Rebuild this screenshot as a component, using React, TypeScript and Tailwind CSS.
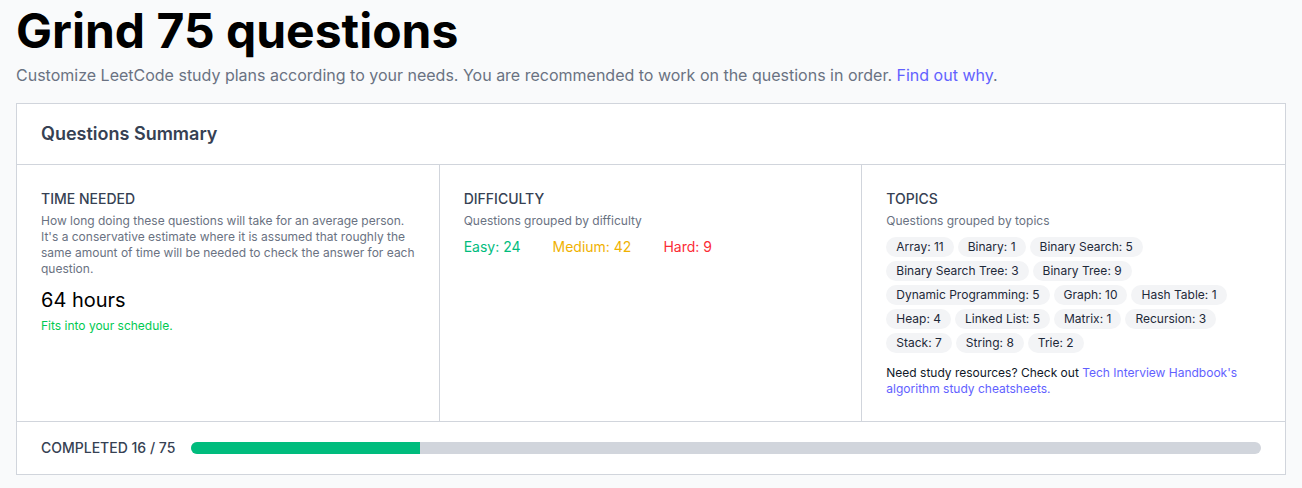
const topics: [string, number][] = [
  ["Array", 11],
  ["Binary", 1],
  ["Binary Search", 5],
  ["Binary Search Tree", 3],
  ["Binary Tree", 9],
  ["Dynamic Programming", 5],
  ["Graph", 10],
  ["Hash Table", 1],
  ["Heap", 4],
  ["Linked List", 5],
  ["Matrix", 1],
  ["Recursion", 3],
  ["Stack", 7],
  ["String", 8],
  ["Trie", 2],
];

function SectionTitle({ title, subtitle }: { title: string; subtitle: string }) {
  return (
    <>
      <h3 className="text-sm font-medium uppercase text-gray-700">{title}</h3>
      <p className="mt-1 text-xs text-gray-500">{subtitle}</p>
    </>
  );
}

export default function App() {
  const completed = 16;
  const total = 75;
  const pct = (completed / total) * 100;

  return (
    <div className="min-h-screen bg-gray-50 px-4 pt-[7px] pb-3.5 font-['Inter',sans-serif]">
      <h1 className="text-5xl leading-none font-bold text-black">Grind 75 questions</h1>
      <p className="mt-2 text-base text-gray-500">
        Customize LeetCode study plans according to your needs. You are recommended to work on
        the questions in order.{" "}
        <a href="#" className="text-indigo-500">
          Find out why
        </a>
        .
      </p>

      <div className="mt-4 border border-gray-300 bg-white">
        <div className="border-b border-gray-300 px-6 py-4">
          <h2 className="text-lg font-semibold text-gray-700">Questions Summary</h2>
        </div>

        <div className="grid grid-cols-3 divide-x divide-gray-300">
          <div className="p-6">
            <h3 className="text-sm font-medium uppercase text-gray-700">Time needed</h3>
            <p className="mt-1 text-xs text-gray-500">
              How long doing these questions will take for an average person. It's a
              conservative estimate where it is assumed that roughly the same amount of time
              will be needed to check the answer for each question.
            </p>
            <p className="mt-[9px] text-xl text-black">64 hours</p>
            <p className="mt-1 text-xs text-green-500">Fits into your schedule.</p>
          </div>

          <div className="p-6">
            <SectionTitle title="Difficulty" subtitle="Questions grouped by difficulty" />
            <div className="mt-2 flex gap-8 text-sm">
              <span className="text-emerald-500">Easy: 24</span>
              <span className="text-yellow-500">Medium: 42</span>
              <span className="text-red-500">Hard: 9</span>
            </div>
          </div>

          <div className="p-6">
            <SectionTitle title="Topics" subtitle="Questions grouped by topics" />
            <div className="mt-2 flex flex-wrap gap-1">
              {topics.map(([name, count]) => (
                <span
                  key={name}
                  className="rounded-full bg-gray-100 px-2.5 py-0.5 text-xs text-gray-800"
                >
                  {name}: {count}
                </span>
              ))}
            </div>
            <p className="mt-3 text-xs text-gray-900">
              Need study resources? Check out{" "}
              <a href="#" className="text-indigo-500">
                Tech Interview Handbook's algorithm study cheatsheets.
              </a>
            </p>
          </div>
        </div>

        <div className="flex items-center gap-4 border-t border-gray-300 px-6 py-4">
          <span className="shrink-0 text-sm font-medium uppercase text-gray-700">
            Completed {completed} / {total}
          </span>
          <div className="h-3 flex-1 overflow-hidden rounded-full bg-gray-300">
            <div className="h-full bg-emerald-500" style={{ width: `${pct}%` }} />
          </div>
        </div>
      </div>
    </div>
  );
}
